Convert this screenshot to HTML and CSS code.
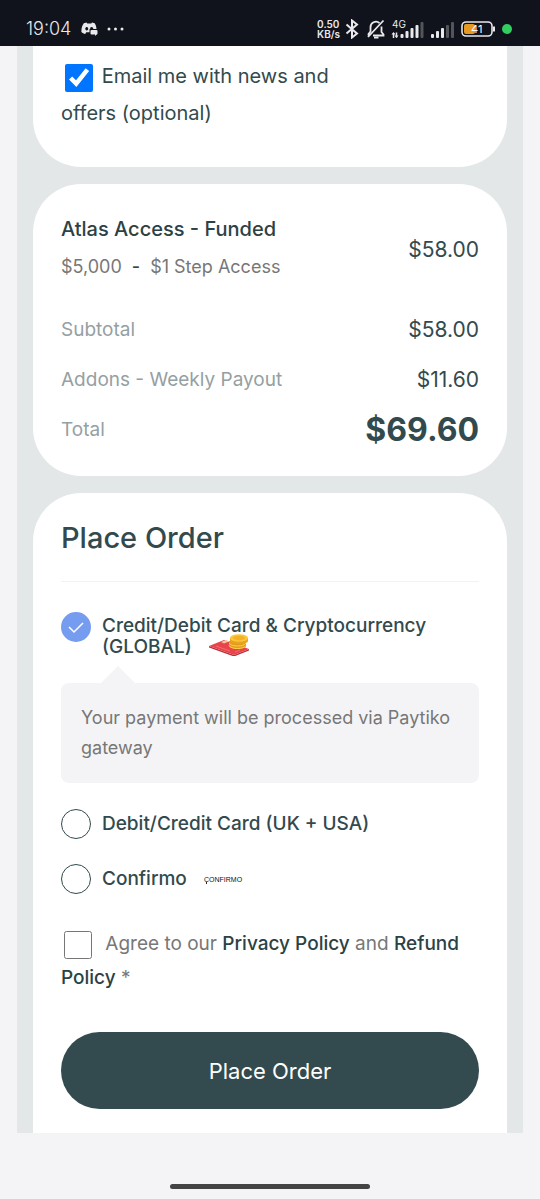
FILE: index.html
```html
<!DOCTYPE html>
<html lang="en">
<head>
<meta charset="utf-8">
<meta name="viewport" content="width=device-width, initial-scale=1">
<title>Place Order</title>
<link rel="stylesheet" href="styles.css">
</head>
<body>
<header class="status">
  <time class="clock">19:04</time>
  <svg class="discord" width="17" height="14" viewBox="0 0 17 14" aria-hidden="true"><path fill="#e9e9ec" fill-rule="evenodd" d="M5.5 .5 2.8 1.3C1.2 3.500 .3 6 .4 10c1.200 1.200 2.400 1.800 3.800 2l1-1.700h3.300V7h7C15.300 4.800 14.700 2.800 13.700 1.300L11 .5l-.7 1H6.200zM5.700 5a1.500 1.700 0 1 0 .1 0zm4.800 0c1.400 0 1.900 1 1.700 2h-3C9 5.800 9.600 5 10.500 5z"/><rect x="9.500" y="8" width="7" height="4.500" rx="1" fill="#e9e9ec"/><path d="M14 12v2l2-2z" fill="#e9e9ec"/></svg>
  <svg class="dots" width="17" height="4" viewBox="0 0 17 4" fill="#e9e9ec" aria-hidden="true"><circle cx="2" cy="2" r="1.500"/><circle cx="8.500" cy="2" r="1.500"/><circle cx="15" cy="2" r="1.500"/></svg>
  <div class="rate"><span>0.50</span><span>KB/s</span></div>
  <svg class="bluetooth" width="14" height="20" viewBox="0 0 14 20" fill="none" stroke="#e9e9ec" stroke-width="2" aria-hidden="true"><path d="M1.500 5.500 12 14.500 7 18.500v-17L12 5.500 1.500 14.500"/></svg>
  <svg class="bell" width="20" height="20" viewBox="0 0 20 20" fill="none" stroke="#e9e9ec" stroke-width="1.800" aria-hidden="true"><path d="M4.500 11V8.500a5.500 5.500 0 0 1 9-4.500M15.500 7.500v5.500l2 2.500v1H7M2 18 17.500 1.500M4.500 10v2.500L2.500 15v1.500"/><path d="M8 18.500h4.500" stroke-width="2"/></svg>
  <svg class="signal" width="34" height="20" viewBox="0 0 34 20" aria-hidden="true"><text x="1" y="9" class="net">4G</text><path d="M2.500 19v-5M5.500 13.500v5" stroke="#e9e9ec" stroke-width="1.500"/><path d="m.5 15.500 2-2.500 2 2.500zM3.500 16.500l2 2.500 2-2.500z" fill="#e9e9ec"/><g fill="#e9e9ec"><rect x="9.500" y="15" width="3" height="4" rx="1"/><rect x="14.500" y="12" width="3" height="7" rx="1"/><rect x="19.500" y="9" width="3" height="10" rx="1"/><rect x="24.500" y="6" width="3" height="13" rx="1"/></g><rect x="29.500" y="3" width="3" height="16" rx="1" fill="#53555b"/></svg>
  <svg class="signal" width="25" height="20" viewBox="0 0 25 20" aria-hidden="true"><g fill="#e9e9ec"><rect x="1" y="15" width="3" height="4" rx="1"/><rect x="6" y="12" width="3" height="7" rx="1"/><rect x="11" y="9" width="3" height="10" rx="1"/></g><g fill="#53555b"><rect x="16" y="6" width="3" height="13" rx="1"/><rect x="21" y="3" width="3" height="16" rx="1"/></g></svg>
  <svg class="battery" width="35" height="16" viewBox="0 0 35 16" aria-hidden="true"><rect x="1" y="1" width="30" height="14" rx="4" fill="none" stroke="#e9e9ec" stroke-width="1.600"/><rect x="3" y="3" width="11" height="10" rx="2" fill="#e59b23"/><path d="M33 5.500v5" stroke="#e9e9ec" stroke-width="2"/><text x="10" y="12" class="charge">41</text></svg>
  <i class="recording"></i>
</header>

<main class="page">
  <section class="card card-news">
    <label class="news"><input type="checkbox" class="tick" checked> Email me with news and offers (optional)</label>
  </section>

  <section class="card card-summary">
    <div class="row product">
      <div>
        <h2 class="product-name">Atlas Access - Funded</h2>
        <p class="product-meta"><span>$5,000</span><b>-</b><span>$1 Step Access</span></p>
      </div>
      <span>$58.00</span>
    </div>
    <div class="row"><span class="term">Subtotal</span><span>$58.00</span></div>
    <div class="row"><span class="term">Addons - Weekly Payout</span><span>$11.60</span></div>
    <div class="row"><span class="term">Total</span><strong class="total">$69.60</strong></div>
  </section>

  <form class="card card-order">
    <h1 class="title">Place Order</h1>
    <label class="method method-global">
      <input type="radio" name="method" class="radio" checked>
      <span class="method-name">Credit/Debit Card &amp; Cryptocurrency (GLOBAL)
        <svg class="coins" width="40" height="22" viewBox="0 0 40 22" aria-hidden="true"><path d="m0 12 25 9 15-6v1.500L25 22.500 0 13.500z" fill="#b92f3a"/><path d="m0 12 15-6 25 9-15 6z" fill="#e9434b"/><path d="m12 8 5-2 3 1.500-5 2z" fill="#f4c6a0"/><path d="m7 12 14 5M26 18l5-2" stroke="#f49a95" stroke-width=".5" fill="none"/><path d="M20 7v5c0 4 17 4 17 0V7z" fill="#e39a1c"/><path d="M20 9c2 4 15 4 17 0M20 11.500c2 4 15 4 17 0" stroke="#ffd34b" fill="none"/><path d="M21 4v3c0 4 18 4 18 0V4z" fill="#e8a321"/><ellipse cx="30" cy="4" rx="9" ry="3.800" fill="#fbc637"/><ellipse cx="30" cy="4" rx="6" ry="2.200" fill="#f5b126"/></svg>
      </span>
    </label>
    <p class="notice">Your payment will be processed via Paytiko gateway</p>
    <label class="method"><input type="radio" name="method" class="radio"><span>Debit/Credit Card (UK + USA)</span></label>
    <label class="method"><input type="radio" name="method" class="radio"><span>Confirmo</span>
      <svg class="confirmo" width="44" height="12" viewBox="0 0 44 12" role="img" aria-label="Confirmo"><text x="1" y="9" class="wordmark">CONFIRMO</text><path d="M3.500 9v2" stroke="#222"/></svg>
    </label>
    <div class="agree"><input type="checkbox" id="agree" class="tick"> <label for="agree">Agree to our</label> <a href="#privacy">Privacy Policy</a> and <a href="#refund">Refund Policy</a> *</div>
    <button type="button" class="submit">Place Order</button>
  </form>
</main>
<footer class="nav"><i class="handle"></i></footer>
</body>
</html>
```
FILE: styles.css
```css
* { box-sizing: border-box; }
body {
  margin: 0;
  background: #f4f4f6;
  color: #324a4d;
  font: 21px/30px Inter, "Liberation Sans", sans-serif;
}
h1, h2, p { margin: 0; }

.status {
  display: flex;
  align-items: center;
  height: 46px;
  padding: 12px 28px 0 26px;
  background: #10131b;
  color: #e9e9ec;
}
.clock { font: 300 18px/24px Inter, sans-serif; }
.discord { margin-left: 10px; }
.dots { margin-left: 9px; }
.rate {
  display: flex;
  flex-direction: column;
  margin-left: auto;
  font: 600 10px/10px Inter, sans-serif;
}
.bluetooth { margin-left: 5px; }
.bell { margin-left: 7px; }
.signal { margin-left: 5px; }
.net { font: 10px Inter, sans-serif; fill: #e9e9ec; }
.battery { margin-left: 6px; }
.charge { font: 11px Inter, sans-serif; fill: #fff; }
.recording {
  width: 10px;
  height: 10px;
  margin-left: 6px;
  border-radius: 50%;
  background: #32cf60;
}

.page {
  display: flex;
  flex-direction: column;
  gap: 17px;
  margin: 0 17px;
  padding: 0 16px;
  background: #e3e7e8;
}
.card {
  padding: 28px;
  border-radius: 48px;
  background: #fff;
}
.card-news {
  padding-top: 12px;
  padding-bottom: 35px;
  border-radius: 0 0 48px 48px;
}
.tick {
  width: 28px;
  height: 28px;
  margin: 0 4px;
  vertical-align: middle;
}
.news {
  display: block;
  max-width: 320px;
  font-size: 20px;
  line-height: 37px;
}
.news .tick { margin-right: 3px; accent-color: #0075ff; }

.card-summary { padding-bottom: 21px; }
.row {
  display: flex;
  align-items: center;
  justify-content: space-between;
  min-height: 50px;
}
.product { margin-bottom: 17px; }
.product-name {
  color: #2b4245;
  font-size: 20px;
  font-weight: 500;
  line-height: 34px;
}
.product-meta {
  display: flex;
  gap: 10px;
  color: #777;
  font-size: 18px;
  line-height: 42px;
}
.product-meta b { color: #324a4d; font-weight: 500; }
.term { color: #95a0a2; font-size: 19px; }
.total { font-size: 32px; }

.card-order {
  padding-bottom: 24px;
  border-radius: 48px 48px 0 0;
}
.title {
  padding-bottom: 26px;
  border-bottom: 1px solid #f2f2f3;
  font-size: 29px;
  font-weight: 500;
  line-height: 34px;
}
.method {
  display: flex;
  align-items: center;
  gap: 11px;
  margin-bottom: 25px;
  font-size: 19px;
  font-weight: 500;
}
.method-global {
  align-items: flex-start;
  margin: 30px 0 26px;
  line-height: 21px;
}
.method-name { padding-top: 3px; }
.radio {
  flex: none;
  width: 30px;
  height: 30px;
  margin: 0;
  border: 1px solid #324a4d;
  border-radius: 50%;
  appearance: none;
}
.radio:checked {
  border: 0;
  background: #769cf0 url("data:image/svg+xml,%3Csvg xmlns='http://www.w3.org/2000/svg' viewBox='0 0 30 30' fill='none' stroke='white' stroke-width='1.500'%3E%3Cpath d='m8 15 5 5 9-9'/%3E%3C/svg%3E");
}
.coins { margin: -2px 0 -4px 12px; vertical-align: top; }
.confirmo { margin-left: 5px; }
.wordmark { font: 7px "Liberation Sans", sans-serif; fill: #111; }
.notice {
  position: relative;
  margin-bottom: 26px;
  padding: 20px;
  border-radius: 8px;
  background: #f4f4f6;
  color: #777;
  font-size: 18px;
}
.notice::before {
  content: "";
  position: absolute;
  bottom: 100%;
  left: 40px;
  border: 17px solid transparent;
  border-top: 0;
  border-bottom-color: #f4f4f6;
}
.agree {
  margin-top: 33px;
  color: #777;
  font-size: 19px;
  line-height: 34px;
}
.agree .tick { margin: 0 8px 0 3px; }
.agree a { color: #2b4245; font-weight: 500; text-decoration: none; }
.submit {
  width: 100%;
  height: 77px;
  margin-top: 37px;
  border: 0;
  border-radius: 39px;
  background: #334b4e;
  color: #fff;
  font: 22px/30px Inter, sans-serif;
}
.nav { padding: 51px 0 10px; }
.handle {
  display: block;
  width: 37%;
  height: 5px;
  margin: 0 auto;
  border-radius: 3px;
  background: #444;
}
```
